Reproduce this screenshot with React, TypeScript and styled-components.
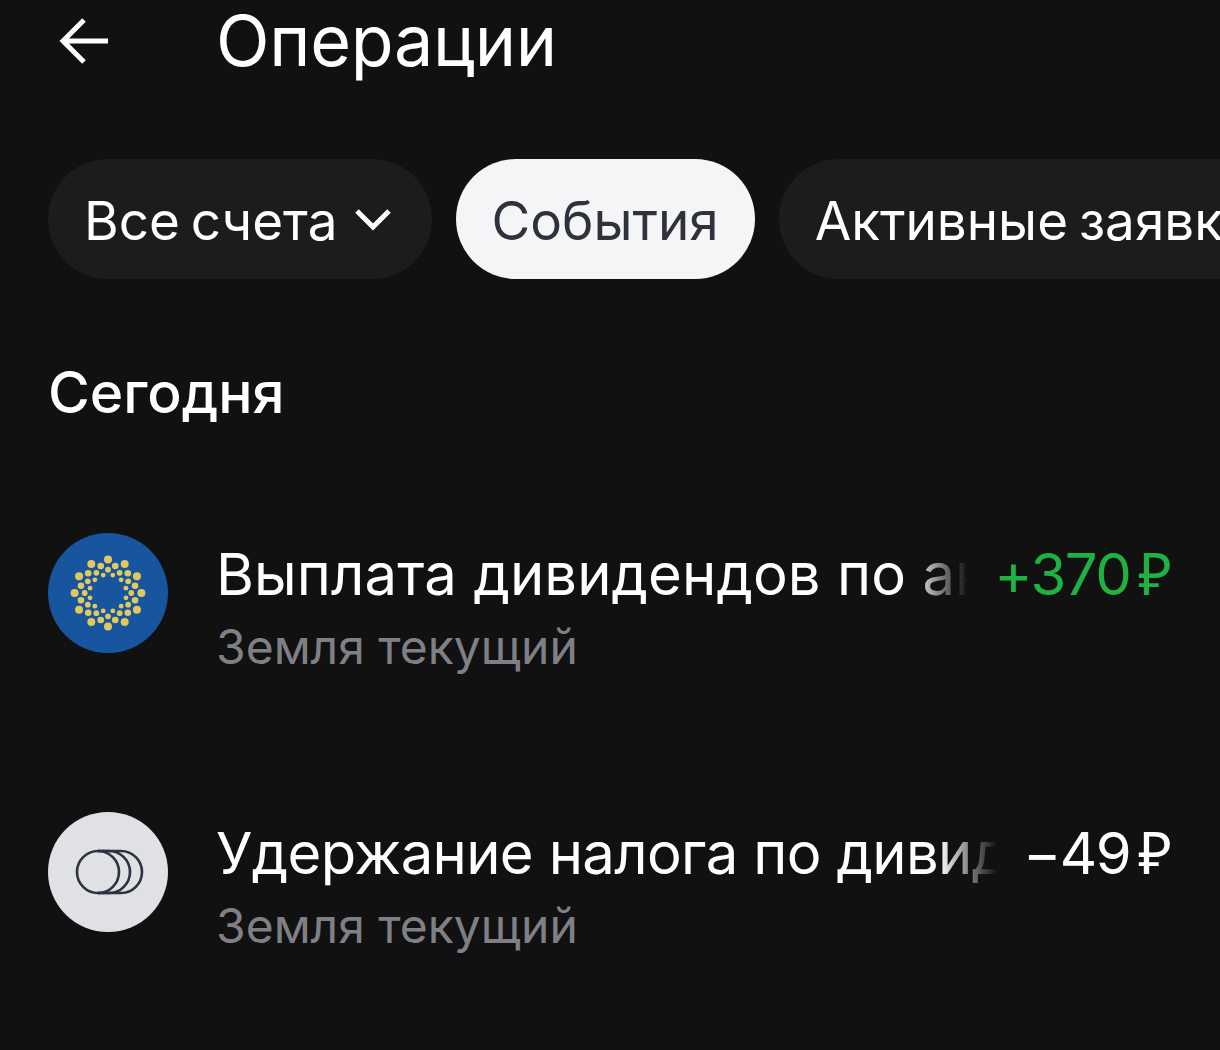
import React from "react";
import styled, { createGlobalStyle } from "styled-components";

const Global = createGlobalStyle`
  html, body { margin: 0; padding: 0; background: #111112; }
  body { font-family: Inter, "Noto Sans", sans-serif; overflow: hidden; }
`;
const Page = styled.div`
  width: 1220px; height: 1050px; background: #111112; overflow: hidden; color: #fff;
  display: flex; flex-direction: column;
`;
const Header = styled.header`
  display: flex; align-items: center; height: 80px; padding-left: 58px; margin-top: 1px;
`;
const BackIcon = styled.svg`
  width: 52px; height: 52px; margin-right: 106px; flex: none;
`;
const Title = styled.h1`
  margin: 0; font-size: 70px; font-weight: 400; line-height: 80px; letter-spacing: -0.25px;
`;
const Chips = styled.div`
  display: flex; gap: 24px; padding-left: 48px; margin-top: 78px; white-space: nowrap;
`;
const Chip = styled.div<{ $active?: boolean }>`
  flex: none; height: 120px; box-sizing: border-box; border-radius: 60px; display: flex; align-items: center; gap: 15px;
  padding: 3px 36px 0; font-size: 53px; font-weight: 400; word-spacing: -4px;
  background: ${(p) => (p.$active ? "#f4f5f6" : "#1c1c1e")};
  color: ${(p) => (p.$active ? "#2f323c" : "#fff")};
`;
const Chevron = styled.svg`
  width: 40px; height: 40px; flex: none; margin: -3px 3px 0 0;
`;
const SectionTitle = styled.h2`
  margin: 76px 0 0 48px; font-size: 57px; line-height: 76px; font-weight: 500;
`;
const List = styled.div`
  display: flex; flex-direction: column; gap: 159px; margin-top: 102px; padding: 0 48px;
`;
const Row = styled.div`
  display: flex; align-items: flex-start; height: 120px; gap: 48px;
`;
const Avatar = styled.div<{ $bg: string }>`
  width: 120px; height: 120px; border-radius: 50%; background: ${(p) => p.$bg}; flex: none;
  display: flex; align-items: center; justify-content: center;
`;
const RowBody = styled.div`
  flex: 1; min-width: 0; display: flex; flex-direction: column; gap: 10px; margin-top: 5px;
`;
const TopLine = styled.div`
  display: flex; align-items: center; gap: 24px;
`;
const RowTitle = styled.div<{ $tight?: boolean }>`
  flex: 1; min-width: 0; white-space: nowrap; overflow: hidden; font-size: 58px; line-height: 70px;
  letter-spacing: ${(p) => (p.$tight ? "-0.65px" : "0.1px")};
  -webkit-mask-image: linear-gradient(to right, #000 calc(100% - 60px), transparent calc(100% - 2px));
  mask-image: linear-gradient(to right, #000 calc(100% - 60px), transparent calc(100% - 2px));
`;
const Amount = styled.div<{ $positive?: boolean }>`
  flex: none; font-size: 58px; line-height: 70px; letter-spacing: -1.5px;
  color: ${(p) => (p.$positive ? "#1fb141" : "#fff")};
`;
const Ruble = styled.span`
  font-family: "Noto Sans", sans-serif; margin-left: 8px; letter-spacing: 0;
`;
const Subtitle = styled.div`
  font-size: 48px; line-height: 56px; color: #7f8086;
`;
const CoinsSvg = styled.svg`
  margin-left: 4px;
`;

function SunLogo() {
  const rings = [
    { r: 33.4, dot: 4, off: 0 },
    { r: 28, dot: 3.3, off: 15 },
    { r: 23.3, dot: 2.9, off: 0 },
    { r: 18.6, dot: 2.4, off: 15 },
  ];
  return (
    <svg width="80" height="80" viewBox="-40 -40 80 80">
      {rings.map((ring) =>
        Array.from({ length: 12 }, (_, i) => {
          const a = ((i * 30 + ring.off) * Math.PI) / 180;
          return (
            <circle
              key={`${ring.r}-${i}`}
              cx={ring.r * Math.cos(a)}
              cy={ring.r * Math.sin(a)}
              r={ring.dot}
              fill="#e1c85f"
            />
          );
        })
      )}
    </svg>
  );
}

function CoinsIcon() {
  return (
    <CoinsSvg width="70" height="48" viewBox="0 0 70 48" fill="none" stroke="#2e3240" strokeWidth="2.6">
      <path d="M23 3 H46 A21 21 0 0 1 46 45 H23" />
      <path d="M23 3 H34 A21 21 0 0 1 34 45 H23" />
      <circle cx="23" cy="24" r="21" />
    </CoinsSvg>
  );
}

export default function App() {
  return (
    <Page>
      <Global />
      <Header>
        <BackIcon viewBox="0 0 52 52" fill="none" stroke="#fff" strokeWidth="5">
          <path d="M50 26 H6 M26 5 L5 26 L26 47" strokeLinejoin="miter" />
        </BackIcon>
        <Title>Операции</Title>
      </Header>
      <Chips>
        <Chip>
          Все счета
          <Chevron viewBox="0 0 40 40" fill="none" stroke="#fff" strokeWidth="5">
            <path d="M4 12 L20 28 L36 12" />
          </Chevron>
        </Chip>
        <Chip $active>События</Chip>
        <Chip>Активные заявки</Chip>
      </Chips>
      <SectionTitle>Сегодня</SectionTitle>
      <List>
        <Row>
          <Avatar $bg="#17559f"><SunLogo /></Avatar>
          <RowBody>
            <TopLine>
              <RowTitle>Выплата дивидендов по акциям</RowTitle>
              <Amount $positive>+370<Ruble>₽</Ruble></Amount>
            </TopLine>
            <Subtitle>Земля текущий</Subtitle>
          </RowBody>
        </Row>
        <Row>
          <Avatar $bg="#dfe1e4"><CoinsIcon /></Avatar>
          <RowBody>
            <TopLine>
              <RowTitle $tight>Удержание налога по дивидендам</RowTitle>
              <Amount>−49<Ruble>₽</Ruble></Amount>
            </TopLine>
            <Subtitle>Земля текущий</Subtitle>
          </RowBody>
        </Row>
      </List>
    </Page>
  );
}
